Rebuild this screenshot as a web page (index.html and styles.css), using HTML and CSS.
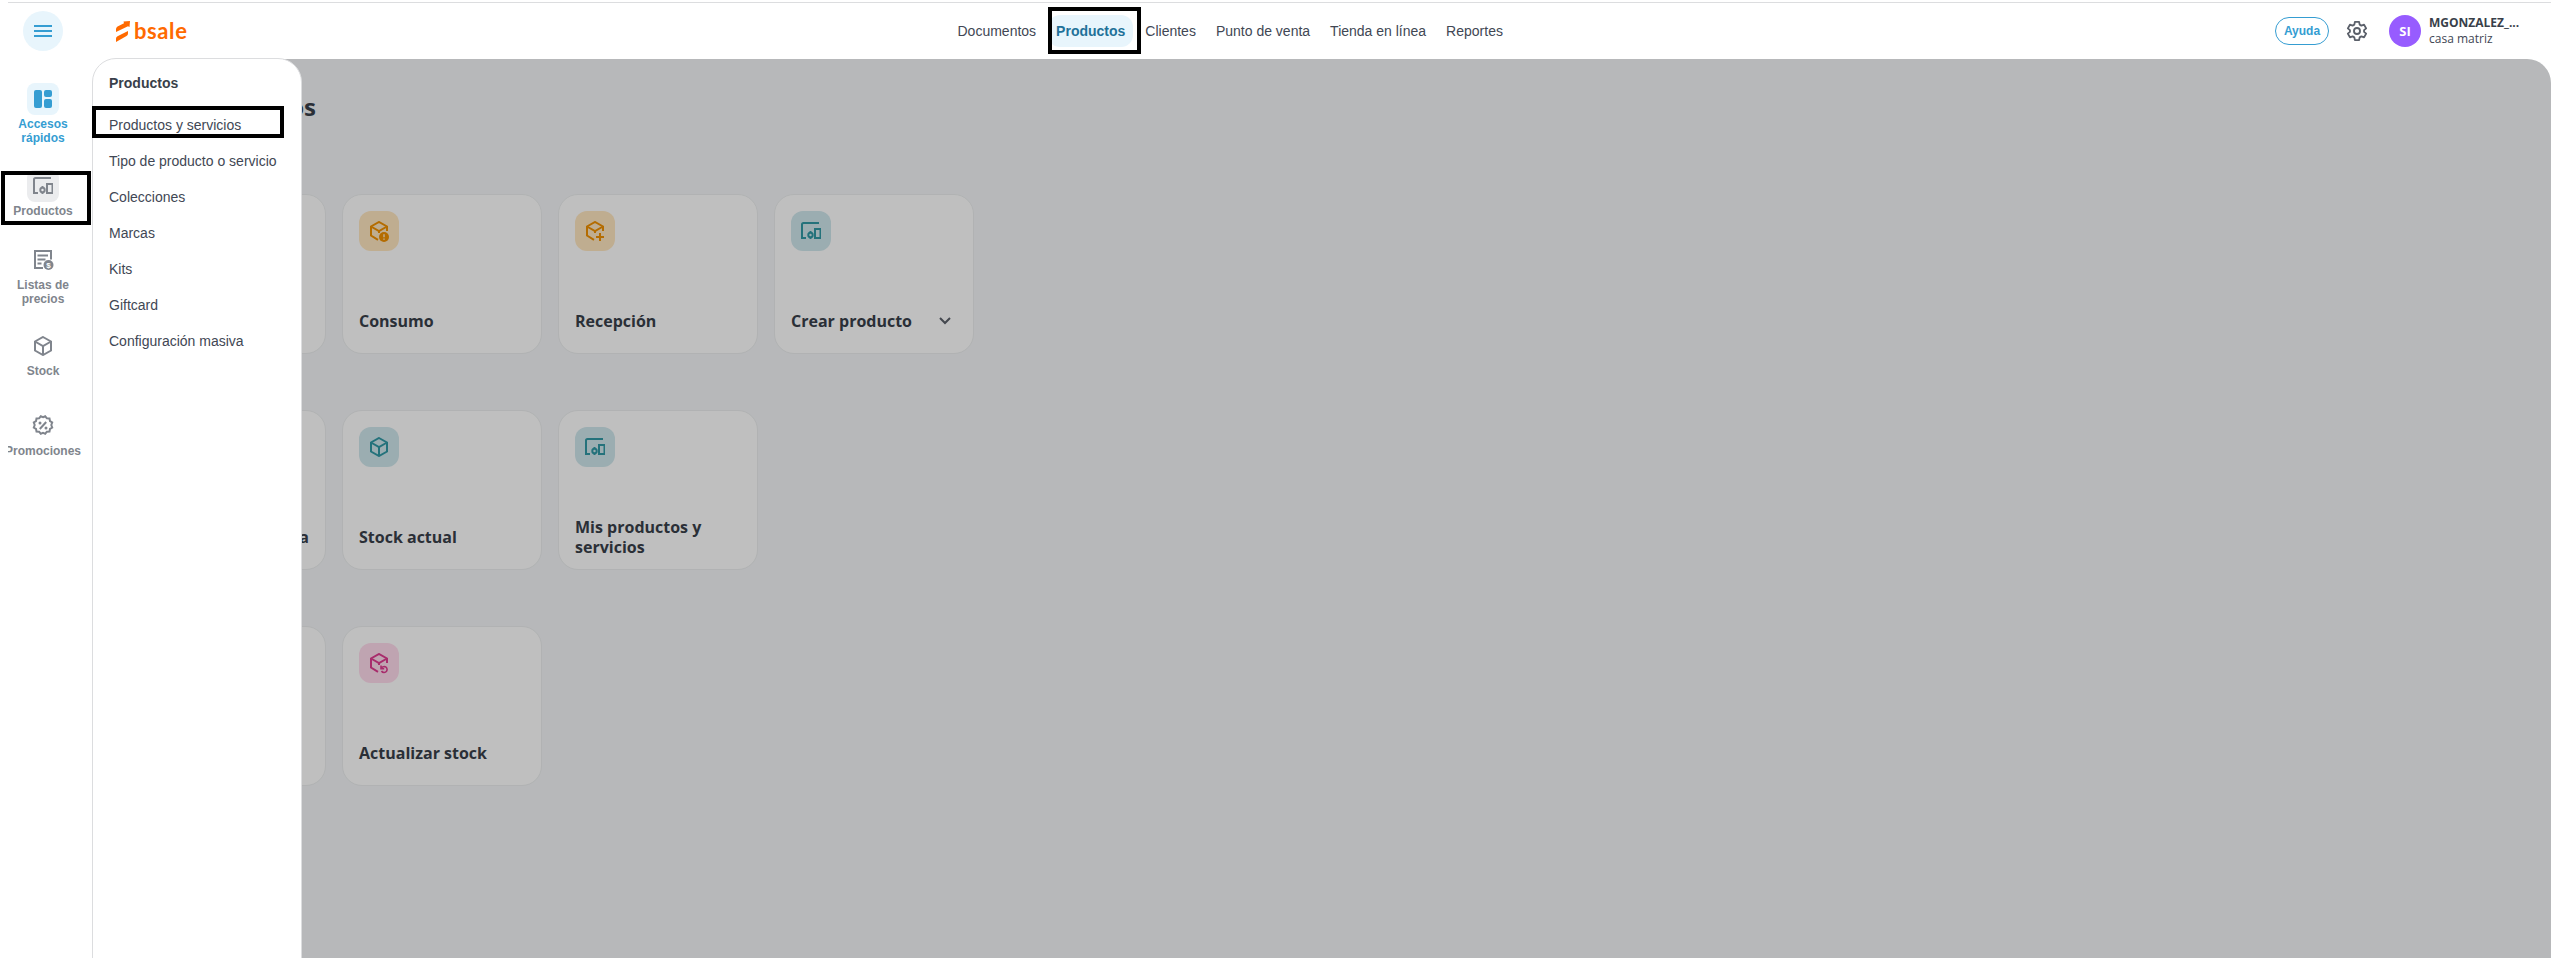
FILE: index.html
```html
<!DOCTYPE html>
<html lang="es">
<head>
  <meta charset="UTF-8">
  <meta name="viewport" content="width=device-width, initial-scale=1.0">
  <title>Bsale - Productos</title>
  <link rel="stylesheet" href="styles.css">
</head>
<body>
  <svg class="sprite" width="0" height="0">
    <symbol id="ico-devices" viewBox="0 0 20 20">
      <path d="M18 2H2.500Q1 2 1 3.500V17H5" />
      <circle cx="9.500" cy="14" r="2.200" />
      <path d="M9.500 10v1.800M9.500 16v2" />
      <path d="M14 8h5.500v9H14z" />
    </symbol>
    <symbol id="ico-box" viewBox="0 0 20 20">
      <path d="M10 1l8 4.500v9L10 19l-8-4.500v-9zM2 5.500l8 4.500 8-4.500M10 10v9" />
    </symbol>
    <symbol id="ico-box-part" viewBox="0 0 20 20">
      <path d="M9 18.800l-7-4.300v-9L10 1l8 4.500V10M2 5.500l8 4.500 8-4.500M10 10v2" />
    </symbol>
  </svg>

  <!-- Cabecera -->
  <header class="header">
    <div class="header-left">
      <button class="menu-toggle">
        <svg width="18" height="14" viewBox="0 0 18 14"><path d="M0 2h18M0 7h18M0 12h18" /></svg>
      </button>
      <div class="logo">
        <svg width="14" height="21" viewBox="0 0 14 21">
          <path d="M0 11V8q0-1.500 1.500-2.500L8 2.200 7.500.5 14 0l-.5 6-1.500-.7zM0 21v-3.500q0-1.500 1.500-2.200L12 10v2.500q0 1.500-1.500 2.500z" />
        </svg>
        <span>bsale</span>
      </div>
    </div>
    <nav class="nav">
      <a>Documentos</a>
      <a class="active">Productos</a>
      <a>Clientes</a>
      <a>Punto de venta</a>
      <a>Tienda en línea</a>
      <a>Reportes</a>
    </nav>
    <div class="header-right">
      <button class="help">Ayuda</button>
      <svg class="gear" width="22" height="22" viewBox="0 0 24 24">
        <path d="M9.700 2h4.600l.6 3 1.900 1.100 2.900-1 2.300 4-2.300 2v1.800l2.300 2-2.300 4-2.900-1-1.900 1.100-.6 3H9.700l-.6-3-1.900-1.100-2.900 1-2.300-4 2.300-2v-1.800L2 9.100l2.300-4 2.900 1L9.100 5z" />
        <circle cx="12" cy="12" r="3.300" />
      </svg>
      <div class="avatar">SI</div>
      <div class="user">
        <strong>MGONZALEZ_...</strong>
        <span>casa matriz</span>
      </div>
    </div>
  </header>

  <div class="layout">
    <!-- Barra lateral -->
    <aside class="sidebar">
      <a class="side-item active">
        <span class="side-icon">
          <svg width="18" height="18" viewBox="0 0 18 18"><rect width="8" height="18" rx="2" /><rect x="10" width="8" height="7" rx="2" /><rect x="10" y="9" width="8" height="9" rx="2" /></svg>
        </span>
        Accesos<br>rápidos
      </a>
      <a class="side-item current">
        <span class="side-icon"><svg class="icon" width="20" height="20"><use href="#ico-devices" /></svg></span>
        Productos
      </a>
      <a class="side-item">
        <span class="side-icon">
          <svg class="icon" width="20" height="20" viewBox="0 0 20 20">
            <path d="M10 18H2V1h16v8.500M4.500 5.500h10.500M4.500 9.500h8M4.500 13.500h4" />
            <circle class="solid" cx="15.500" cy="15" r="5" />
            <text x="15.500" y="18">$</text>
          </svg>
        </span>
        Listas de<br>precios
      </a>
      <a class="side-item">
        <span class="side-icon"><svg class="icon" width="20" height="20"><use href="#ico-box" /></svg></span>
        Stock
      </a>
      <a class="side-item">
        <span class="side-icon">
          <svg class="icon" width="22" height="22" viewBox="0 0 22 22">
            <path d="M11 2.200l2.200-.9 1.700 2 2.600.2.500 2.600 2.200 1.400-.9 2.500.9 2.500-2.200 1.400-.5 2.600-2.600.2-1.700 2-2.200-.8-2.200.8-1.700-2-2.600-.2-.5-2.600-2.200-1.400.9-2.500-.9-2.500L4 6.100l.5-2.600 2.600-.2 1.700-2zM7.800 14l6.400-7" />
            <circle class="solid" cx="8" cy="8" r="1.500" />
            <circle class="solid" cx="14" cy="13" r="1.500" />
          </svg>
        </span>
        Promociones
      </a>
    </aside>

    <!-- Contenido -->
    <main class="content">
      <h1>os</h1>
      <div class="cards">
        <div class="card"></div>
        <div class="card">
          <span class="tile orange">
            <svg class="icon" width="20" height="20" viewBox="0 0 20 20"><use href="#ico-box-part" /><circle class="solid" cx="15" cy="16" r="5" /><path class="mark" d="M15 13.300v3M15 17.500v1.300" /></svg>
          </span>
          <div class="label">Consumo</div>
        </div>
        <div class="card">
          <span class="tile orange">
            <svg class="icon" width="20" height="20" viewBox="0 0 20 20"><use href="#ico-box-part" /><path d="M15 12v8M11 16h8" /></svg>
          </span>
          <div class="label">Recepción</div>
        </div>
        <div class="card">
          <span class="tile teal"><svg class="icon" width="20" height="20"><use href="#ico-devices" /></svg></span>
          <div class="label">
            Crear producto
            <svg class="chevron" width="12" height="8" viewBox="0 0 12 8"><path d="M1 1l5 5 5-5" /></svg>
          </div>
        </div>
      </div>
      <div class="cards">
        <div class="card"><div class="label end">a</div></div>
        <div class="card">
          <span class="tile teal"><svg class="icon" width="20" height="20"><use href="#ico-box" /></svg></span>
          <div class="label">Stock actual</div>
        </div>
        <div class="card">
          <span class="tile teal"><svg class="icon" width="20" height="20"><use href="#ico-devices" /></svg></span>
          <div class="label">Mis productos y<br>servicios</div>
        </div>
      </div>
      <div class="cards">
        <div class="card"></div>
        <div class="card">
          <span class="tile pink">
            <svg class="icon" width="20" height="20" viewBox="0 0 20 20"><use href="#ico-box-part" /><path class="thin" d="M12 12.500v3.200h3.200M12.500 15q1-1.500 2.800-1.500a3 3 0 1 1-2.800 4.500" /></svg>
          </span>
          <div class="label">Actualizar stock</div>
        </div>
      </div>
      <div class="overlay"></div>
    </main>

    <!-- Submenú desplegado -->
    <div class="submenu">
      <h2>Productos</h2>
      <a>Productos y servicios</a>
      <a>Tipo de producto o servicio</a>
      <a>Colecciones</a>
      <a>Marcas</a>
      <a>Kits</a>
      <a>Giftcard</a>
      <a>Configuración masiva</a>
    </div>
  </div>

  <!-- Recuadros de los pasos -->
  <div class="mark-box mark-nav"></div>
  <div class="mark-box mark-side"></div>
  <div class="mark-box mark-submenu"></div>
</body>
</html>
```

FILE: styles.css
```css
:root {
  --blue: #359dd2;
  --blue-light: #e8f5fc;
  --blue-dark: #1f7199;
  --text: #414754;
  --text-dark: #393f4a;
  --gray: #80858d;
  --line: #dcdddf;
  --orange: #ff6a00;
}

* {
  box-sizing: border-box;
  margin: 0;
  padding: 0;
}

body {
  position: relative;
  height: 958px;
  overflow: hidden;
  background: #fff;
  color: var(--text);
  font-family: "Liberation Sans", Arial, sans-serif;
  font-size: 14px;
}

button {
  border: none;
  font-family: inherit;
  cursor: pointer;
}

.sprite {
  position: absolute;
}

.icon {
  fill: none;
  stroke: currentColor;
  stroke-width: 2;
  overflow: visible;
}

.icon .solid {
  fill: currentColor;
  stroke: none;
}

.icon .thin {
  stroke-width: 1.6;
}

.icon text {
  fill: #fff;
  stroke: none;
  font-size: 8px;
  font-weight: 700;
  text-anchor: middle;
}

/* cabecera */
.header {
  display: grid;
  grid-template-columns: 941.5px 1fr auto;
  align-items: center;
  height: 57px;
  margin: 2px 0 0 8px;
  padding-right: 30px;
  border-top: 1px solid var(--line);
}

.header-left {
  display: flex;
  align-items: center;
  gap: 53px;
  padding-left: 15px;
}

.menu-toggle {
  display: flex;
  align-items: center;
  justify-content: center;
  width: 40px;
  height: 40px;
  border-radius: 50%;
  background: var(--blue-light);
}

.menu-toggle svg {
  stroke: var(--blue);
  stroke-width: 2;
}

.logo {
  display: flex;
  align-items: center;
  gap: 4px;
  color: var(--orange);
  font-family: Lato, sans-serif;
  font-size: 22px;
  font-weight: 700;
  letter-spacing: 0.6px;
  line-height: 24px;
}

.logo svg {
  fill: currentColor;
}

.nav {
  display: flex;
  gap: 4px;
}

.nav a {
  padding: 0 8px;
  border-radius: 12px;
  line-height: 32px;
}

.nav .active {
  background: var(--blue-light);
  color: var(--blue-dark);
  font-weight: 700;
}

.header-right {
  display: flex;
  align-items: center;
  font-family: "Open Sans", "Noto Sans", sans-serif;
}

.help {
  width: 54px;
  height: 28px;
  border: 1px solid var(--blue);
  border-radius: 14px;
  background: #fff;
  color: var(--blue);
  font-family: "Liberation Sans", Arial, sans-serif;
  font-size: 12px;
  font-weight: 700;
}

.gear {
  margin: 0 21px 0 17px;
  fill: none;
  stroke: #5b606a;
  stroke-width: 2;
  stroke-linejoin: round;
}

.avatar {
  width: 32px;
  margin-right: 8px;
  border-radius: 50%;
  background: #975cff;
  color: #fff;
  font-size: 13px;
  font-weight: 700;
  line-height: 32px;
  text-align: center;
}

.user {
  display: flex;
  flex-direction: column;
  width: 92px;
  font-size: 12px;
  line-height: 16px;
  white-space: nowrap;
}

.user strong {
  color: var(--text-dark);
}

/* cuerpo */
.layout {
  display: flex;
  position: relative;
  height: 899px;
}

.sidebar {
  display: grid;
  grid-template-rows: 87px 74px 86px 80px 80px;
  align-content: start;
  width: 85px;
  margin-left: 8px;
  padding-top: 24px;
  overflow: hidden;
}

.side-item {
  display: flex;
  flex-direction: column;
  align-items: center;
  width: 80px;
  margin-left: -5px;
  color: var(--gray);
  font-size: 12px;
  font-weight: 700;
  line-height: 14px;
  text-align: center;
}

.side-icon {
  display: flex;
  align-items: center;
  justify-content: center;
  width: 32px;
  height: 32px;
  margin-bottom: 2px;
  border-radius: 8px;
}

.side-item.active {
  color: var(--blue);
}

.side-item.active svg {
  fill: currentColor;
}

.active .side-icon {
  background: var(--blue-light);
}

.current .side-icon {
  background: #ebecee;
}

.content {
  position: relative;
  flex: 1;
  padding: 32px 33px;
  border-radius: 32px 24px 0 0;
  background: #f4f6f8;
  font-family: "Open Sans", "Noto Sans", sans-serif;
  overflow: hidden;
}

.content h1 {
  width: 190px;
  height: 103px;
  color: var(--text-dark);
  font-size: 24px;
  line-height: 32px;
  text-align: right;
}

.cards {
  display: flex;
  gap: 16px;
  margin-bottom: 56px;
}

.card {
  display: flex;
  flex-direction: column;
  justify-content: space-between;
  width: 200px;
  height: 160px;
  padding: 16px 16px 12px;
  border: 1px solid #eceeef;
  border-radius: 20px;
  background: #fff;
}

.tile {
  display: flex;
  align-items: center;
  justify-content: center;
  width: 40px;
  height: 40px;
  border-radius: 12px;
}

.orange {
  background: #ffe7c0;
  color: #f09000;
}

.teal {
  background: #cfe7ec;
  color: #3099a5;
}

.pink {
  background: #ffdbec;
  color: #e03b90;
}

.orange .mark {
  stroke: #ffe7c0;
  stroke-width: 1.5;
}

.label {
  display: flex;
  align-items: center;
  justify-content: space-between;
  height: 40px;
  color: var(--text-dark);
  font-size: 16px;
  font-weight: 700;
  line-height: 20px;
}

.label.end {
  justify-content: flex-end;
  margin-top: auto;
}

.chevron {
  margin-right: 6px;
  fill: none;
  stroke: #5b606a;
  stroke-width: 2;
}

.overlay {
  position: absolute;
  inset: 0;
  background: rgba(0, 0, 0, 0.25);
}

.submenu {
  position: absolute;
  top: -1px;
  left: 92px;
  display: flex;
  flex-direction: column;
  width: 210px;
  height: 902px;
  padding: 6px 16px;
  border: 1px solid var(--line);
  border-radius: 24px 24px 0 0;
  background: #fff;
  white-space: nowrap;
}

.submenu h2 {
  margin-bottom: 6px;
  color: var(--text-dark);
  font-size: 14px;
  line-height: 36px;
}

.submenu a {
  line-height: 36px;
}

/* recuadros negros */
.mark-box {
  position: absolute;
  border: 4px solid #000;
}

.mark-nav {
  top: 7px;
  left: 1048px;
  width: 93px;
  height: 47px;
}

.mark-side {
  top: 171px;
  left: 1px;
  width: 90px;
  height: 54px;
}

.mark-submenu {
  top: 106px;
  left: 92px;
  width: 192px;
  height: 32px;
}
```
